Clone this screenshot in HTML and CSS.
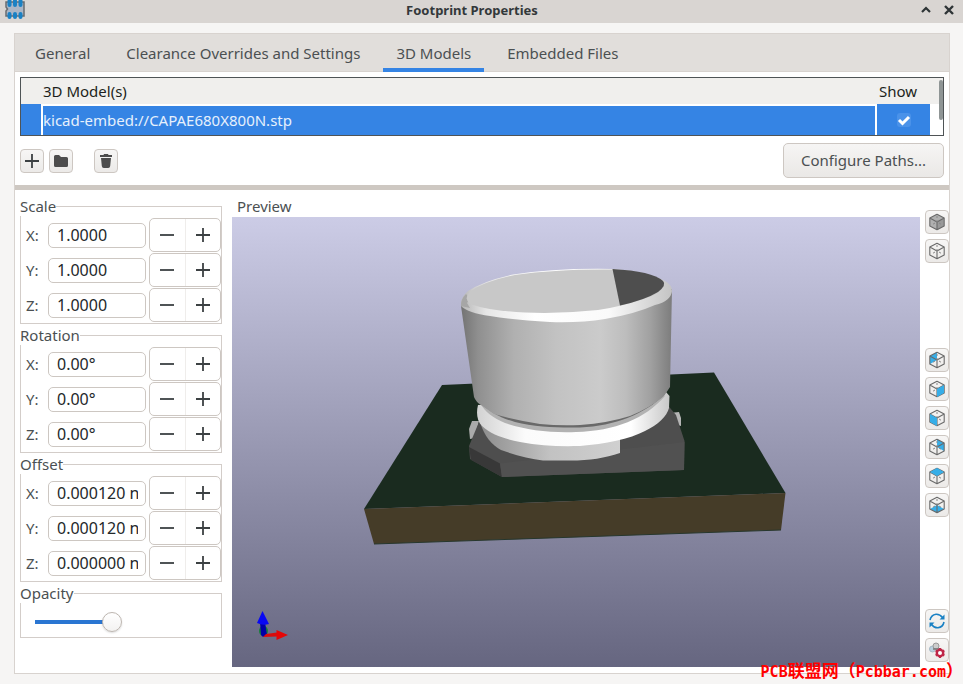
FILE: index.html
```html
<!DOCTYPE html>
<html lang="en">
<head>
    <meta charset="UTF-8">
    <meta name="viewport" content="width=device-width, initial-scale=1.0">
    <title>Footprint Properties</title>
    <link rel="stylesheet" href="styles.css">
</head>
<body>
    <!-- shared icon parts -->
    <svg class="defs" width="0" height="0" aria-hidden="true">
        <symbol id="cube" viewBox="0 0 18 18">
            <path d="M9 1.200 16.200 5v8L9 16.800 1.800 13V5zM1.800 5 9 9l7.200-4M9 9v7.800" fill="none" stroke="#6a6a6a" stroke-width="1.100" stroke-linejoin="round"/>
            <path d="M9 3v2M9 7v2M7 10l-2 1.200M11 10l2 1.200" fill="none" stroke="#888" stroke-width="1"/>
        </symbol>
        <symbol id="minus" viewBox="0 0 16 16"><path d="M1 8h14" stroke="#3c4143" stroke-width="1.800"/></symbol>
        <symbol id="plus" viewBox="0 0 16 16"><path d="M1 8h14M8 1v14" stroke="#3c4143" stroke-width="1.800"/></symbol>
    </svg>

    <div class="dialog">
        <header class="titlebar">
            <svg class="app-icon" width="20" height="20" viewBox="0 0 20 20">
                <path d="M1 2h18v14H1v-5l1.500-2L1 7z" fill="#aab6c6" stroke="#686c70" stroke-width="1.500"/>
                <path d="M4.500 1v4M10 1v4M15.500 1v4M4.500 14v3M10 14v3M15.500 14v3" stroke="#1a81c4" stroke-width="4" stroke-linecap="round"/>
            </svg>
            <h1>Footprint Properties</h1>
            <div class="window-buttons">
                <button aria-label="Maximize"><svg width="12" height="12" viewBox="0 0 12 12"><path d="M2 8l4-4 4 4" fill="none" stroke="#2e3436" stroke-width="2.200"/></svg></button>
                <button aria-label="Close"><svg width="12" height="12" viewBox="0 0 12 12"><path d="M2 2l8 8M10 2l-8 8" stroke="#2e3436" stroke-width="2.400"/></svg></button>
            </div>
        </header>

        <main class="notebook">
            <nav class="tabs" role="tablist">
                <button class="tab" role="tab">General</button>
                <button class="tab" role="tab">Clearance Overrides and Settings</button>
                <button class="tab active" role="tab" aria-selected="true">3D Models</button>
                <button class="tab" role="tab">Embedded Files</button>
            </nav>

            <section class="models">
                <div class="grid">
                    <table>
                        <thead>
                            <tr><th class="col-mark"></th><th>3D Model(s)</th><th class="col-show">Show</th><th class="col-end"></th></tr>
                        </thead>
                        <tbody>
                            <tr>
                                <td class="mark"></td>
                                <td class="path">kicad-embed://CAPAE680X800N.stp</td>
                                <td class="show">
                                    <label class="check">
                                        <input type="checkbox" aria-label="Show" checked>
                                        <svg width="14" height="14" viewBox="0 0 14 14"><path d="M2 7l3.500 3.500L12 4" fill="none" stroke="#fff" stroke-width="3"/></svg>
                                    </label>
                                </td>
                                <td></td>
                            </tr>
                        </tbody>
                    </table>
                    <span class="scroll-thumb"></span>
                </div>
                <div class="model-actions">
                    <button class="icon-btn" aria-label="Add model"><svg width="16" height="16"><use href="#plus"/></svg></button>
                    <button class="icon-btn" aria-label="Browse"><svg width="16" height="16" viewBox="0 0 16 16"><path d="M1 3.500Q1 2 2.500 2H6l2 2h5.500Q15 4 15 5.500v7q0 1.500-1.500 1.500h-11Q1 14 1 12.500z" fill="#4d4d4d"/></svg></button>
                    <button class="icon-btn delete" aria-label="Delete model"><svg width="16" height="16" viewBox="0 0 16 16"><path d="M2 2h3.500l.5-1h4l.5 1H14v2H2zM3 5h10l-.8 8q-.2 2-2 2H5.800q-1.800 0-2-2z" fill="#4d4d4d"/></svg></button>
                    <button class="text-btn">Configure Paths...</button>
                </div>
            </section>

            <section class="lower">
                <div class="settings">
                    <fieldset>
                        <legend>Scale</legend>
                        <div class="row"><label for="scale-x">X:</label><input type="text" id="scale-x" value="1.0000"><div class="spin"><button aria-label="Decrease"><svg width="16" height="16"><use href="#minus"/></svg></button><button aria-label="Increase"><svg width="16" height="16"><use href="#plus"/></svg></button></div></div>
                        <div class="row"><label for="scale-y">Y:</label><input type="text" id="scale-y" value="1.0000"><div class="spin"><button aria-label="Decrease"><svg width="16" height="16"><use href="#minus"/></svg></button><button aria-label="Increase"><svg width="16" height="16"><use href="#plus"/></svg></button></div></div>
                        <div class="row"><label for="scale-z">Z:</label><input type="text" id="scale-z" value="1.0000"><div class="spin"><button aria-label="Decrease"><svg width="16" height="16"><use href="#minus"/></svg></button><button aria-label="Increase"><svg width="16" height="16"><use href="#plus"/></svg></button></div></div>
                    </fieldset>
                    <fieldset>
                        <legend>Rotation</legend>
                        <div class="row"><label for="rot-x">X:</label><input type="text" id="rot-x" value="0.00°"><div class="spin"><button aria-label="Decrease"><svg width="16" height="16"><use href="#minus"/></svg></button><button aria-label="Increase"><svg width="16" height="16"><use href="#plus"/></svg></button></div></div>
                        <div class="row"><label for="rot-y">Y:</label><input type="text" id="rot-y" value="0.00°"><div class="spin"><button aria-label="Decrease"><svg width="16" height="16"><use href="#minus"/></svg></button><button aria-label="Increase"><svg width="16" height="16"><use href="#plus"/></svg></button></div></div>
                        <div class="row"><label for="rot-z">Z:</label><input type="text" id="rot-z" value="0.00°"><div class="spin"><button aria-label="Decrease"><svg width="16" height="16"><use href="#minus"/></svg></button><button aria-label="Increase"><svg width="16" height="16"><use href="#plus"/></svg></button></div></div>
                    </fieldset>
                    <fieldset>
                        <legend>Offset</legend>
                        <div class="row"><label for="off-x">X:</label><input type="text" id="off-x" value="0.000120 n"><div class="spin"><button aria-label="Decrease"><svg width="16" height="16"><use href="#minus"/></svg></button><button aria-label="Increase"><svg width="16" height="16"><use href="#plus"/></svg></button></div></div>
                        <div class="row"><label for="off-y">Y:</label><input type="text" id="off-y" value="0.000120 n"><div class="spin"><button aria-label="Decrease"><svg width="16" height="16"><use href="#minus"/></svg></button><button aria-label="Increase"><svg width="16" height="16"><use href="#plus"/></svg></button></div></div>
                        <div class="row"><label for="off-z">Z:</label><input type="text" id="off-z" value="0.000000 n"><div class="spin"><button aria-label="Decrease"><svg width="16" height="16"><use href="#minus"/></svg></button><button aria-label="Increase"><svg width="16" height="16"><use href="#plus"/></svg></button></div></div>
                    </fieldset>
                    <fieldset class="opacity">
                        <legend>Opacity</legend>
                        <input type="range" aria-label="Opacity" min="0" max="100" value="44">
                    </fieldset>
                </div>

                <div class="preview">
                    <h2>Preview</h2>
                    <div class="canvas">
                        <svg viewBox="232 217 688 450" preserveAspectRatio="xMidYMid meet">
                            <defs>
                                <linearGradient id="can">
                                    <stop offset="0" stop-color="#737373"/>
                                    <stop offset=".08" stop-color="#8f8f8f"/>
                                    <stop offset=".25" stop-color="#b0b0b0"/>
                                    <stop offset=".45" stop-color="#c2c2c2"/>
                                    <stop offset=".66" stop-color="#cbcbcb"/>
                                    <stop offset=".78" stop-color="#bdbdbd"/>
                                    <stop offset=".9" stop-color="#a0a0a0"/>
                                    <stop offset="1" stop-color="#7c7c7c"/>
                                </linearGradient>
                                <linearGradient id="ring">
                                    <stop offset="0" stop-color="#d2d2d2"/>
                                    <stop offset=".25" stop-color="#fbfbfb"/>
                                    <stop offset=".8" stop-color="#fff"/>
                                    <stop offset="1" stop-color="#c8c8c8"/>
                                </linearGradient>
                                <linearGradient id="rim">
                                    <stop offset="0" stop-color="#b5b5b5"/>
                                    <stop offset=".12" stop-color="#e6e6e6"/>
                                    <stop offset=".35" stop-color="#fff"/>
                                    <stop offset=".7" stop-color="#fafafa"/>
                                    <stop offset="1" stop-color="#c4c4c4"/>
                                </linearGradient>
                                <linearGradient id="foot">
                                    <stop offset="0" stop-color="#8d8d8d"/>
                                    <stop offset=".5" stop-color="#c2c2c2"/>
                                    <stop offset="1" stop-color="#d0d0d0"/>
                                </linearGradient>
                            </defs>
                            <!-- board -->
                            <path d="M442 385 714 372.500 785.500 493 364 509z" fill="#1a2b1f"/>
                            <path d="M364 509 785.500 493 781 530 374 544z" fill="#453c28"/>
                            <path d="M374 544 781 530" stroke="#27372d" stroke-width="1"/>
                            <!-- pads -->
                            <path d="M472 421h7l-4 17-5 1-1-10z" fill="#aaa"/>
                            <path d="M670 413l9-1 2 6v8l-4-1-3-9z" fill="#b5b5b5"/>
                            <!-- plastic base -->
                            <path d="M479 422 500 402 665 402 676 415 684.500 441 684 470 502 477 470 459 469 446z" fill="#4e4e4e"/>
                            <path d="M469 447 500 463.500 502 477 471 460z" fill="#383838"/>
                            <path d="M500 463.500 684.500 442 684 470 502 477z" fill="#515151"/>
                            <!-- capacitor can -->
                            <path d="M480 422C484 436 492 445 501 450 515 455 530 459 543 460.500H570C590 460.500 605 458 620 453V436L560 425z" fill="url(#foot)"/>
                            <path d="M478 405C476 413 477 421 482 426 492 435 505 439 520 442 540 446 560 446.500 580 446 605 444 630 439 645 431 658 425 667 416 669 408L669.500 396 666 392 560 400z" fill="url(#ring)"/>
                            <path d="M480 403C485 412 493 418 505 423 525 430 550 433 576 432 615 431 645 419 665 396L640 400z" fill="#b2b2b2"/>
                            <path d="M481 403C490 412 500 418 515 422 535 427 560 428 580 427.500 615 426 645 414 665 394L640 395z" fill="#696969"/>
                            <path d="M461 306 474 397Q476 402 481 405L494 414Q515 420 540 424 560 426 580 425 608 423 630 416 650 408 664 396L670 387 672 289z" fill="url(#can)"/>
                            <path d="M461 306Q460 298 468 291 483 281 513 274.500 555 268 613 269 645 271 665 281 672 285 672 291 671 301 655 305 635 314 605 319 580 323 550 322 515 320 490 316 468 313 461 306z" fill="url(#rim)"/>
                            <path d="M461 306Q461 299 466 294L470 299 467 303 470 308z" fill="#a6a6a6"/>
                            <path d="M470 304Q463 298 471 291 485 281 515 275 555 269 613 269.500L664 282Q665 290 652 296 625 306 598 310 560 314 525 312.500 490 311 470 304z" fill="#c8c8c8"/>
                            <path d="M612.500 269Q652 271 663 281 667 285 658 292 645 300 620 305.500z" fill="#4e4e4e"/>
                            <!-- axes -->
                            <ellipse cx="263.500" cy="631" rx="4.500" ry="5" fill="#15803a"/>
                            <path d="M260 622h5l2 13-4 2-2-2z" fill="#0000a8"/>
                            <path d="M262.500 611 269 624Q263 626 257 623z" fill="#0808f4"/>
                            <path d="M263 637l3-3 11-1.500v4z" fill="#d80c0c"/>
                            <path d="M276.500 630 288 635 276.500 640z" fill="#e60606"/>
                        </svg>
                    </div>
                </div>

                <div class="view-tools">
                    <button class="icon-btn" aria-label="Solid view"><svg width="18" height="18"><path d="M9 1 16 5v8L9 17 2 13V5z" fill="#b0b0b0"/><path d="M9 9l7-4v8l-7 4z" fill="#999"/><use href="#cube"/></svg></button>
                    <button class="icon-btn" aria-label="Wireframe view"><svg width="18" height="18"><use href="#cube"/></svg></button>
                    <div class="spacer upper"></div>
                    <button class="icon-btn" aria-label="View left"><svg width="18" height="18"><path d="M9 1v8l-7 4V5z" fill="#36aee8"/><use href="#cube"/></svg></button>
                    <button class="icon-btn" aria-label="View right"><svg width="18" height="18"><use href="#cube"/><path d="M9 9l7-4v8l-7 4z" fill="#36aee8"/></svg></button>
                    <button class="icon-btn" aria-label="View front"><svg width="18" height="18"><use href="#cube"/><path d="M9 9 2 5v8l7 4z" fill="#36aee8"/></svg></button>
                    <button class="icon-btn" aria-label="View back"><svg width="18" height="18"><path d="M9 1l7 4v8L9 9z" fill="#36aee8"/><use href="#cube"/></svg></button>
                    <button class="icon-btn" aria-label="View top"><svg width="18" height="18"><use href="#cube"/><path d="M9 1l7 4-7 4-7-4z" fill="#36aee8"/></svg></button>
                    <button class="icon-btn" aria-label="View bottom"><svg width="18" height="18"><path d="M9 9l7 4-7 4-7-4z" fill="#36aee8"/><use href="#cube"/></svg></button>
                    <div class="spacer"></div>
                    <button class="icon-btn" aria-label="Reload board"><svg width="18" height="18" viewBox="0 0 18 18"><path d="M2 8Q3 3 8 2.200 12 2 14.500 5.500M16 10Q15 15 10 15.800 6 16 3.500 12.500" fill="none" stroke="#1a81c4" stroke-width="1.600"/><path d="M16.500 2.500v5h-5zM1.500 15.500v-5h5z" fill="#1a81c4"/></svg></button>
                    <button class="icon-btn" aria-label="Preview options"><svg width="18" height="18" viewBox="0 0 18 18"><circle cx="4.500" cy="8" r="3" fill="#b9cfdd" stroke="#a5b8c4"/><circle cx="8" cy="5" r="3" fill="#ccc" stroke="#999"/><path d="M5 8h6" stroke="#777" stroke-width="1.500"/><circle cx="12" cy="12" r="3.200" fill="#fff" stroke="#bf2647" stroke-width="2.400"/><path d="M12 7v2M12 15v2M7.700 9.500l1.700 1M14.600 13.500l1.700 1M7.700 14.500l1.700-1M14.600 10.500l1.700-1" stroke="#bf2647" stroke-width="2.200"/></svg></button>
                </div>
            </section>
        </main>
        <div class="watermark">PCB<span>联盟网（</span>Pcbbar.com<span>）</span></div>
    </div>
</body>
</html>
```

FILE: styles.css
```css
* {
    box-sizing: border-box;
}
body {
    margin: 0;
    font-family: "Noto Sans", "Noto Sans CJK SC", sans-serif;
    font-size: 15px;
    line-height: 19px;
    color: #4b5052;
    background-color: #f6f5f4;
}
button, input {
    font: inherit;
    color: inherit;
}
button {
    padding: 0;
    border: none;
    background: none;
}
svg {
    display: block;
}
.defs {
    position: absolute;
}
.dialog {
    display: flex;
    flex-direction: column;
    position: relative;
    min-height: 100vh;
}

/* title bar */
.titlebar {
    display: grid;
    grid-template-columns: 1fr auto 1fr;
    align-items: center;
    height: 23px;
    padding: 0 8px 3px 5px;
    background-color: #d9d5d2;
}
.titlebar h1 {
    margin: 0 16px 0 0;
    font-size: 13px;
    line-height: 18px;
    color: #33383a;
}
.window-buttons {
    display: flex;
    justify-content: flex-end;
    gap: 11px;
}

/* notebook */
.notebook {
    display: flex;
    flex-direction: column;
    flex: 1;
    margin: 10px 13px 10px 14px;
    border: 1px solid #d8d3cf;
    background-color: #fff;
}
.tabs {
    display: flex;
    gap: 10px;
    height: 38px;
    padding: 0 7px;
    background-color: #e1dedb;
    border-bottom: 1px solid #d8d3cf;
}
.tab {
    height: 38px;
    padding: 4px 13px 0;
    border-bottom: 4px solid transparent;
}
.tab.active {
    border-bottom-color: #3584e4;
}

/* model list */
.models {
    padding: 5px 5px 7px;
    border-bottom: 5px solid #cec8c2;
}
.grid {
    position: relative;
    border: 1px solid #4f5456;
}
table {
    width: 100%;
    border-collapse: separate;
    border-spacing: 0;
    table-layout: fixed;
    color: #1c1f20;
}
th {
    height: 26px;
    padding: 0 0 0 2px;
    background-color: #f0efed;
    font-weight: normal;
    text-align: left;
}
.col-mark {
    width: 20px;
}
.col-show {
    width: 53px;
}
.col-end {
    width: 13px;
}
td {
    height: 31px;
    padding: 0;
}
.mark, .path, .show {
    background-color: #3584e4;
}
.path {
    border: solid #fff;
    border-width: 2px 2px 0;
    color: #e6f0fc;
}
.check {
    display: block;
    position: relative;
    width: 14px;
    height: 14px;
    margin: auto;
    border-radius: 3px;
    background-color: #4a92e9;
}
.check input {
    display: block;
    appearance: none;
    width: 14px;
    height: 14px;
    margin: 0;
}
.check svg {
    position: absolute;
    inset: 0;
}
.scroll-thumb {
    position: absolute;
    top: 2px;
    right: 0;
    width: 4px;
    height: 40px;
    border-radius: 2px;
    background-color: #8f9595;
}
.model-actions {
    display: flex;
    align-items: center;
    gap: 5px;
    padding-top: 7px;
}
.icon-btn {
    display: flex;
    align-items: center;
    justify-content: center;
    width: 24px;
    height: 24px;
    border: 1px solid #cdc7c2;
    border-radius: 4px;
    background: linear-gradient(#f7f6f5, #eceae8);
}
.delete {
    margin-left: 16px;
}
.text-btn {
    height: 35px;
    margin-left: auto;
    padding: 0 17px;
    border: 1px solid #cdc7c2;
    border-radius: 5px;
    background: linear-gradient(#f6f5f4, #eae8e6);
}

/* lower half */
.lower {
    display: flex;
    flex: 1;
    padding: 7px 0 6px 5px;
}
.settings {
    display: flex;
    flex-direction: column;
    gap: 2px;
    flex: 0 0 202px;
}
fieldset {
    min-width: 0;
    margin: 0;
    padding: 2px 0 1px 5px;
    border: 1px solid #d3cdc9;
}
legend {
    margin-left: -6px;
    padding: 0;
}
.row {
    display: flex;
    align-items: center;
    margin-bottom: 1px;
}
.row:last-child {
    margin-bottom: 0;
}
.row label {
    width: 22px;
}
.row input {
    width: 98px;
    height: 25px;
    padding: 0 7px 0 8px;
    border: 1px solid #cdc7c2;
    border-radius: 5px;
    background-color: #fff;
    font-size: 16px;
    color: #24282a;
}
.spin {
    display: flex;
    flex: 1;
    height: 34px;
    margin-left: 3px;
    border: 1px solid #cdc7c2;
    border-radius: 5px;
}
.spin button {
    display: flex;
    flex: 1;
    align-items: center;
    justify-content: center;
}
.spin button + button {
    border-left: 1px solid #efedeb;
}
.opacity {
    padding: 9px 14px 5px;
}
.opacity legend {
    margin-left: -15px;
}
.opacity input {
    display: block;
    appearance: none;
    width: 100%;
    height: 20px;
    margin: 0;
    background: linear-gradient(#2a76d2, #2a76d2) left center / 45% 4px no-repeat;
}
.opacity input::-webkit-slider-thumb {
    appearance: none;
    width: 20px;
    height: 20px;
    border: 1px solid #bdb6b0;
    border-radius: 50%;
    background: linear-gradient(#fff, #f3f2f1);
    box-shadow: 0 1px 2px rgba(0, 0, 0, 0.15);
}
.preview {
    display: flex;
    flex-direction: column;
    flex: 1;
    margin: 0 5px 0 10px;
}
.preview h2 {
    margin: 0 0 1px 5px;
    font-size: 15px;
    font-weight: normal;
}
.canvas {
    flex: 1;
    background: linear-gradient(#cccce6, #666680);
}
.canvas svg {
    width: 100%;
    height: 100%;
}
.view-tools {
    display: flex;
    flex-direction: column;
    gap: 5px;
    padding: 13px 0 5px;
}
.spacer {
    flex: 1;
}
.spacer.upper {
    flex: 0 0 75px;
}

.watermark {
    position: absolute;
    right: 0;
    bottom: 2px;
    font: bold 15px "DejaVu Sans Mono", monospace;
    line-height: 20px;
    color: #f00;
    white-space: nowrap;
}
.watermark span {
    font-family: "Noto Sans CJK SC", sans-serif;
    font-size: 17px;
}
```
